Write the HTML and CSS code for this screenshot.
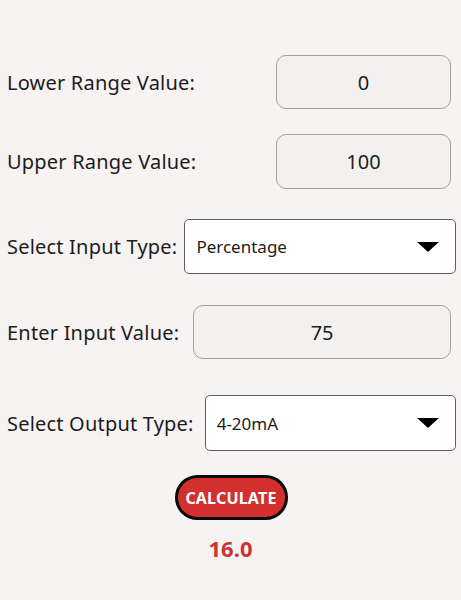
FILE: index.html
```html
<!DOCTYPE html>
<html>
<head>
<meta charset="utf-8">
<link rel="stylesheet" href="styles.css">
</head>
<body>
<div class="form">
  <div class="row row-lower">
    <span class="label">Lower Range Value:</span>
    <div class="field field-range">0</div>
  </div>
  <div class="row row-upper">
    <span class="label">Upper Range Value:</span>
    <div class="field field-range">100</div>
  </div>
  <div class="row row-intype">
    <span class="label">Select Input Type:</span>
    <div class="select select-in"><span>Percentage</span><span class="arrow"></span></div>
  </div>
  <div class="row row-value">
    <span class="label">Enter Input Value:</span>
    <div class="field field-value">75</div>
  </div>
  <div class="row row-outtype">
    <span class="label">Select Output Type:</span>
    <div class="select select-out"><span>4-20mA</span><span class="arrow"></span></div>
  </div>
  <div class="actions">
    <div class="btn">CALCULATE</div>
    <div class="result">16.0</div>
  </div>
</div>
</body>
</html>
```
FILE: styles.css
```css
html, body {
  margin: 0;
  padding: 0;
  background: #f6f3f2;
}
body {
  font-family: "Noto Sans", "Open Sans", sans-serif;
  color: #1c1c1c;
  width: 461px;
  height: 600px;
}
.form {
  padding-top: 55px;
  display: flex;
  flex-direction: column;
}
.row {
  display: flex;
  align-items: center;
  padding-left: 7px;
}
.label {
  font-size: 20px;
  letter-spacing: 0.2px;
  white-space: nowrap;
}
.field {
  box-sizing: border-box;
  height: 54px;
  border: 1px solid #a3a1a0;
  border-radius: 10px;
  background: #f2f1f0;
  display: flex;
  align-items: center;
  justify-content: center;
  font-size: 20px;
}
.field-range {
  width: 175px;
  margin-left: auto;
  margin-right: 10px;
}
.row-upper { margin-top: 25px; }
.row-upper .field { height: 55px; }
.row-intype { margin-top: 30px; }
.row-value { margin-top: 31px; }
.row-outtype { margin-top: 36px; }
.select {
  box-sizing: border-box;
  height: 55px;
  border: 1px solid #5f5f5f;
  border-radius: 5px;
  background: #ffffff;
  display: flex;
  align-items: center;
  justify-content: space-between;
  padding: 0 16px 0 11px;
  font-size: 17px;
  flex: 1;
  margin-right: 5px;
}
.select-in { margin-left: 7px; }
.select-out { margin-left: 11px; height: 56px; }
.arrow {
  width: 0;
  height: 0;
  border-left: 11px solid transparent;
  border-right: 11px solid transparent;
  border-top: 10px solid #000;
}
.field-value {
  flex: 1;
  margin-left: 14px;
  margin-right: 10px;
}
.actions {
  display: flex;
  flex-direction: column;
  align-items: center;
  margin-top: 24px;
}
.btn {
  box-sizing: border-box;
  width: 113px;
  height: 45px;
  margin-left: 1px;
  border: 3px solid #0a0a0a;
  border-radius: 23px;
  background: #d32f2f;
  color: #fff;
  font-weight: 700;
  font-size: 16px;
  letter-spacing: 0.2px;
  display: flex;
  align-items: center;
  justify-content: center;
}
.result {
  margin-top: 13px;
  color: #cc3333;
  font-weight: 700;
  font-size: 22px;
}
```
